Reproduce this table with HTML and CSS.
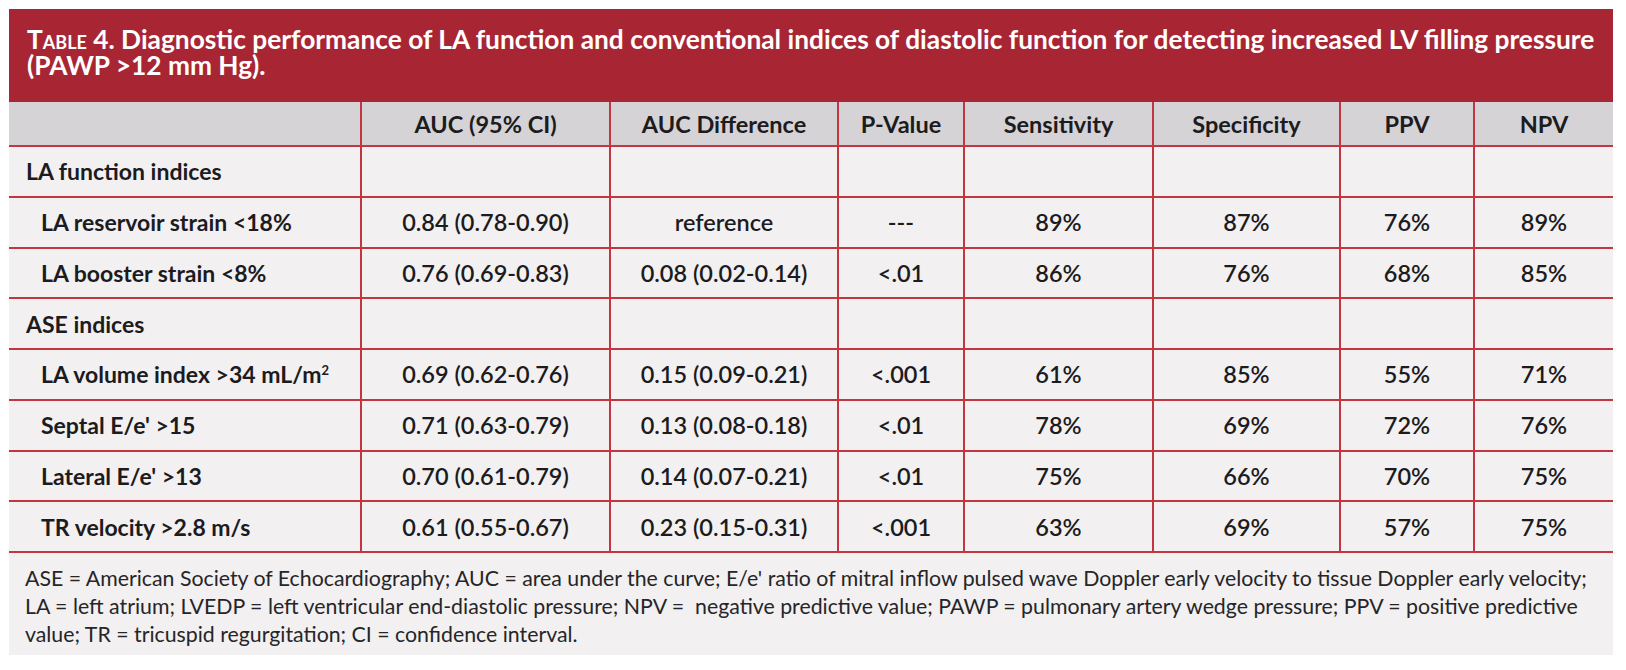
FILE: index.html
```html
<!DOCTYPE html>
<html lang="en">
<head>
<meta charset="utf-8">
<title>Table 4</title>
<link rel="stylesheet" href="styles.css">
</head>
<body>
<div class="card">
  <div class="title"><span class="sc">Table</span> 4. Diagnostic performance of LA function and conventional indices of diastolic function for detecting increased LV filling pressure<br>(PAWP &gt;12 mm Hg).</div>
  <table class="data">
    <colgroup>
      <col class="c1"><col class="c2"><col class="c3"><col class="c4"><col class="c5"><col class="c6"><col class="c7"><col class="c8">
    </colgroup>
    <thead>
      <tr>
        <th></th>
        <th>AUC (95% CI)</th>
        <th>AUC Difference</th>
        <th>P-Value</th>
        <th>Sensitivity</th>
        <th>Specificity</th>
        <th>PPV</th>
        <th>NPV</th>
      </tr>
    </thead>
    <tbody>
      <tr class="group"><td class="lbl">LA function indices</td><td></td><td></td><td></td><td></td><td></td><td></td><td></td></tr>
      <tr><td class="lbl sub">LA reservoir strain &lt;18%</td><td>0.84 (0.78-0.90)</td><td>reference</td><td>---</td><td>89%</td><td>87%</td><td>76%</td><td>89%</td></tr>
      <tr><td class="lbl sub">LA booster strain &lt;8%</td><td>0.76 (0.69-0.83)</td><td>0.08 (0.02-0.14)</td><td>&lt;.01</td><td>86%</td><td>76%</td><td>68%</td><td>85%</td></tr>
      <tr class="group"><td class="lbl">ASE indices</td><td></td><td></td><td></td><td></td><td></td><td></td><td></td></tr>
      <tr><td class="lbl sub">LA volume index &gt;34 mL/m<sup>2</sup></td><td>0.69 (0.62-0.76)</td><td>0.15 (0.09-0.21)</td><td>&lt;.001</td><td>61%</td><td>85%</td><td>55%</td><td>71%</td></tr>
      <tr><td class="lbl sub">Septal E/e' &gt;15</td><td>0.71 (0.63-0.79)</td><td>0.13 (0.08-0.18)</td><td>&lt;.01</td><td>78%</td><td>69%</td><td>72%</td><td>76%</td></tr>
      <tr><td class="lbl sub">Lateral E/e' &gt;13</td><td>0.70 (0.61-0.79)</td><td>0.14 (0.07-0.21)</td><td>&lt;.01</td><td>75%</td><td>66%</td><td>70%</td><td>75%</td></tr>
      <tr><td class="lbl sub">TR velocity &gt;2.8 m/s</td><td>0.61 (0.55-0.67)</td><td>0.23 (0.15-0.31)</td><td>&lt;.001</td><td>63%</td><td>69%</td><td>57%</td><td>75%</td></tr>
    </tbody>
  </table>
  <p class="foot">ASE = American Society of Echocardiography; AUC = area under the curve; E/e' ratio of mitral inflow pulsed wave Doppler early velocity to tissue Doppler early velocity;<br>LA = left atrium; LVEDP = left ventricular end-diastolic pressure; NPV = &nbsp;negative predictive value; PAWP = pulmonary artery wedge pressure; PPV = positive predictive<br>value; TR = tricuspid regurgitation; CI = confidence interval.</p>
</div>
</body>
</html>
```

FILE: styles.css
```css
html, body {
  margin: 0;
  padding: 0;
  background: #ffffff;
}

body {
  padding: 9px 0 0 9px;
  font-family: "Lato", "Liberation Sans", sans-serif;
  color: #1c1b1d;
}

.card {
  width: 1604px;
  background: #f2f0f1;
}

.title {
  background: #a82634;
  color: #ffffff;
  font-weight: 700;
  font-size: 26.3px;
  line-height: 26px;
  white-space: nowrap;
  padding: 17px 4px 24px 18px;
}

.title .sc {
  font-variant: small-caps;
}

.data {
  width: 1604px;
  table-layout: fixed;
  border-collapse: collapse;
}

.c1 { width: 352px; }
.c2 { width: 249px; }
.c3 { width: 228px; }
.c4 { width: 126px; }
.c5 { width: 189px; }
.c6 { width: 187px; }
.c7 { width: 134px; }
.c8 { width: 139px; }

.data th,
.data td {
  border: 2px solid #c23642;
  padding: 0 6px;
  text-align: center;
  vertical-align: middle;
  white-space: nowrap;
}

.data th:first-child,
.data td:first-child {
  border-left: none;
}

.data th:last-child,
.data td:last-child {
  border-right: none;
}

.data thead th {
  border-top: none;
  background: #d5d3d6;
  height: 43px;
  font-size: 23.5px;
  font-weight: 700;
}

.data tbody tr {
  height: 50.75px;
}

.data tbody td {
  font-size: 23.5px;
  font-weight: 600;
}

.data td.lbl {
  text-align: left;
  padding-left: 17px;
  font-size: 23px;
  font-weight: 700;
}

.data td.sub {
  padding-left: 32px;
}

.data sup {
  font-size: 13px;
  vertical-align: 8px;
  line-height: 0;
}

.foot {
  margin: 0;
  padding: 11px 8px 7px 16px;
  font-size: 21.3px;
  line-height: 28px;
  font-weight: 400;
  color: #262527;
}
```
